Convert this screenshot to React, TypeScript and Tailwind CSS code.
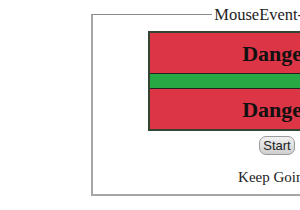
export default function App() {
  return (
    <div className="w-[300px] h-[210px] overflow-hidden bg-white font-['Liberation_Serif',serif] text-black">
      <div className="w-[600px] pt-[6px] pl-[91px]">
        <fieldset className="w-[372px] h-[190px] border-2 border-[#a6a6a6] [border-top-color:#8a8a8a] [border-top-width:1px] px-[55px]">
          <legend className="mx-auto px-[2px] text-[16.5px] leading-[17px] text-[#222]">MouseEvent-demo</legend>
          <div className="mt-[8px] w-[258px] border-2 border-[#334433]">
            <div className="h-[41px] flex items-center justify-center bg-[#dc3545] border-b border-[#222]">
              <span className="text-[22px] font-bold text-[#111]">Danger</span>
            </div>
            <div className="h-[15px] bg-[#28a745] border-b border-[#222]" />
            <div className="h-[40px] flex items-center justify-center bg-[#dc3545]">
              <span className="text-[22px] font-bold text-[#111]">Danger</span>
            </div>
          </div>
          <div className="flex justify-center mt-[5px]">
            <button className="h-[19px] px-[3px] rounded-[7px] border border-[#9a9a9a] bg-gradient-to-b from-[#f2f2f2] to-[#cfcfcf] font-['Liberation_Sans',sans-serif] text-[13px] leading-[15px] text-[#222]">
              Start
            </button>
          </div>
          <p className="mt-[14px] text-center text-[15px] leading-[17px] text-[#222]">Keep Going!</p>
        </fieldset>
      </div>
    </div>
  );
}
